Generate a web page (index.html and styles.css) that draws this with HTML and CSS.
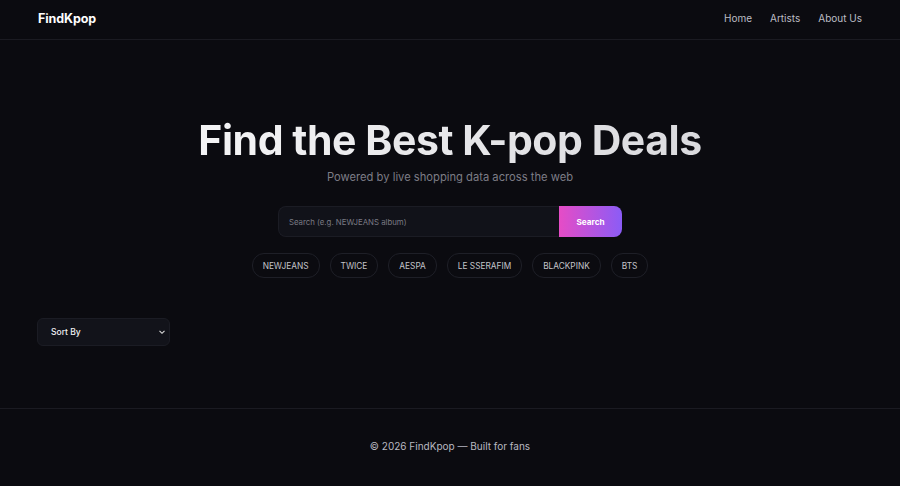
FILE: index.html
```html
<!DOCTYPE html>
<html lang="en">
<head>
  <meta charset="UTF-8">
  <meta name="viewport" content="width=device-width, initial-scale=1.0">
  <title>FindKpop</title>
  <link rel="stylesheet" href="styles.css">
</head>
<body>
  <header class="site-header">
    <a href="#" class="logo">FindKpop</a>
    <nav class="nav">
      <a href="#">Home</a>
      <a href="#">Artists</a>
      <a href="#">About Us</a>
    </nav>
  </header>

  <main class="main">
    <section class="hero">
      <h1>Find the Best K-pop Deals</h1>
      <p class="subtitle">Powered by live shopping data across the web</p>

      <form class="search">
        <input type="text" placeholder="Search (e.g. NEWJEANS album)">
        <button type="button">Search</button>
      </form>

      <div class="chips">
        <span class="chip">NEWJEANS</span>
        <span class="chip">TWICE</span>
        <span class="chip">AESPA</span>
        <span class="chip">LE SSERAFIM</span>
        <span class="chip">BLACKPINK</span>
        <span class="chip">BTS</span>
      </div>
    </section>

    <section class="results">
      <div class="sort">
        <span>Sort By</span>
        <svg width="8" height="8" viewBox="0 0 8 8"><path d="M1.5 2.8 L4 5.3 L6.5 2.8" fill="none" stroke="#ddd" stroke-width="1.1"/></svg>
      </div>
    </section>
  </main>

  <footer class="footer">
    © 2026 FindKpop — Built for fans
  </footer>
</body>
</html>
```

FILE: styles.css
```css
body {
  margin: 0;
  font-family: Inter, 'Noto Sans', sans-serif;
  background-color: #0b0b10;
  color: #e6e6ea;
}
a {
  text-decoration: none;
  color: inherit;
}

/* 顶部导航 */
.site-header {
  height: 39px;
  display: flex;
  align-items: center;
  justify-content: space-between;
  padding: 0 38px;
  border-bottom: 1px solid #1b1b22;
}
.logo {
  font-weight: 700;
  font-size: 12.5px;
  color: #fff;
  letter-spacing: -0.1px;
  margin-top: -2px;
}
.nav {
  display: flex;
  gap: 18px;
  margin-top: -3px;
}
.nav a {
  font-size: 10px;
  color: #bdbdc4;
}

.main {
  height: 368px;
}

/* 主视觉 */
.hero {
  text-align: center;
  padding-top: 77px;
}
.hero h1 {
  margin: 0;
  font-size: 41px;
  line-height: 46px;
  font-weight: 700;
  letter-spacing: -0.45px;
  background: linear-gradient(90deg, #ffffff, #cfcfd4);
  -webkit-background-clip: text;
  background-clip: text;
  color: transparent;
}
.subtitle {
  margin: 7px 0 0;
  font-size: 11.2px;
  color: #7d7d86;
}

.search {
  display: flex;
  width: 344px;
  height: 31px;
  margin: 22px auto 0;
}
.search input {
  flex: 1;
  min-width: 0;
  background: #111219;
  border: 1px solid #1b1c24;
  border-right: none;
  border-radius: 8px 0 0 8px;
  padding: 0 10px;
  font-family: inherit;
  font-size: 7.8px;
  color: #ddd;
  outline: none;
}
.search input::placeholder {
  color: #7a7a84;
}
.search button {
  width: 63px;
  border: none;
  border-radius: 0 8px 8px 0;
  background: linear-gradient(90deg, #e64cc6, #8b5cf6);
  color: #fff;
  font-family: inherit;
  font-size: 8.2px;
  font-weight: 700;
}

.chips {
  display: flex;
  justify-content: center;
  gap: 10px;
  margin-top: 16px;
}
.chip {
  height: 23px;
  padding: 0 10px;
  display: flex;
  align-items: center;
  border: 1px solid #1e1f27;
  border-radius: 12px;
  font-size: 8.3px;
  color: #c4c4ca;
}

/* 排序 */
.results {
  padding: 40px 37px 0;
}
.sort {
  width: 133px;
  height: 28px;
  box-sizing: border-box;
  display: flex;
  align-items: center;
  justify-content: space-between;
  padding: 0 3px 0 13px;
  background: #12131a;
  border: 1px solid #1b1c24;
  border-radius: 6px;
  font-size: 8.5px;
  font-weight: 500;
  color: #f0f0f2;
}

.footer {
  border-top: 1px solid #1b1b22;
  text-align: center;
  padding-top: 31px;
  height: 46px;
  font-size: 10px;
  color: #b9b9c0;
}
```
